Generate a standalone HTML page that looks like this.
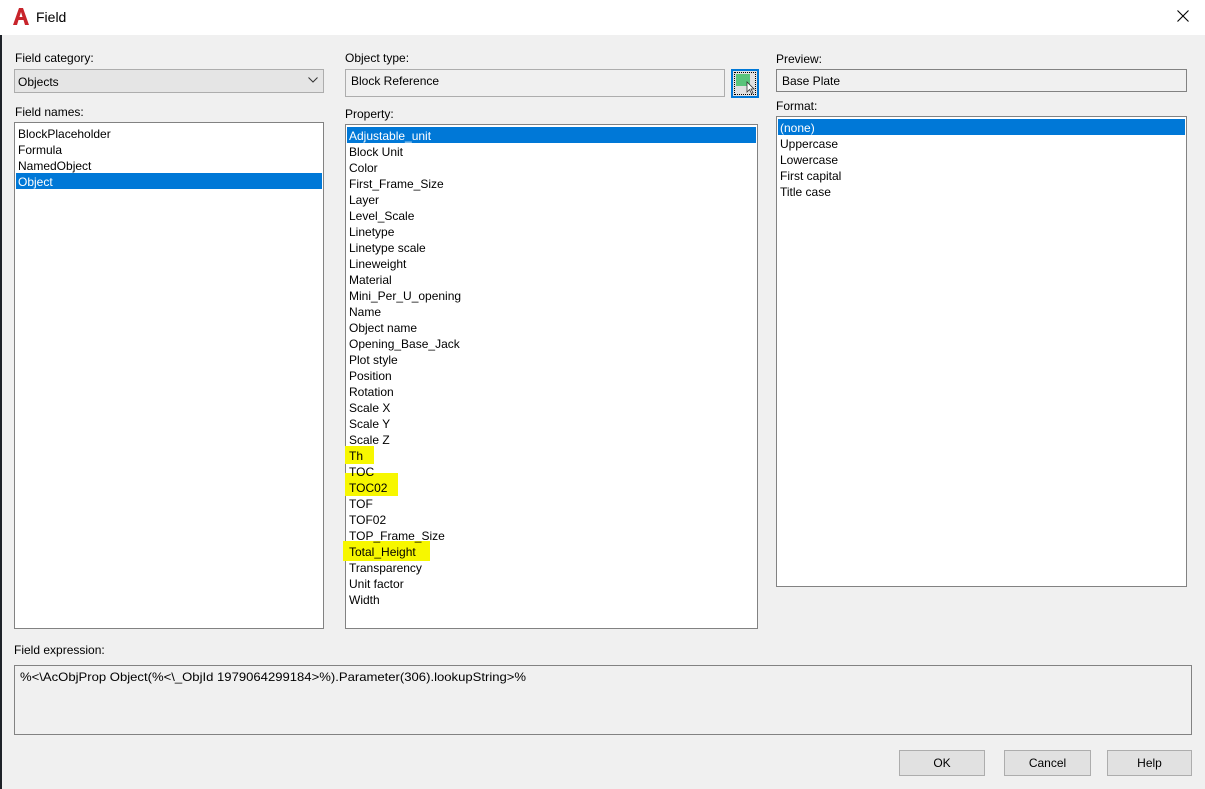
<!DOCTYPE html>
<html><head><style>
*{margin:0;padding:0;box-sizing:border-box}
body{width:1205px;height:789px;background:#f0f0f0;position:relative;overflow:hidden;font-family:"Liberation Sans",sans-serif;font-size:12px;color:#000}
.a{position:absolute}
.title{left:0;top:0;width:1205px;height:35px;background:#fff}
.lbl{position:absolute;font-size:12px;line-height:14px}
.box{position:absolute;background:#fff;border:1px solid #828282}
.row{position:absolute;height:16px;line-height:18px;white-space:nowrap;padding-left:2px}
.sel{background:#0078d7;color:#fff}
.yl{position:absolute;background:#f7f700}
.btn{position:absolute;background:#e1e1e1;border:1px solid #adadad;text-align:center;line-height:24px;font-size:12px}
</style></head><body>
<div class="a" style="left:0;top:35px;width:2px;height:754px;background:#1e2228"></div>
<div class="a title"></div>
<svg class="a" style="left:11px;top:7px" width="20" height="19" viewBox="0 0 20 19"><path d="M2 18 L8 1 L12 1 L18 18 L14 18 L12.5 13 L7.5 13 L6 18 Z M8.5 10 L11.5 10 L10 5 Z" fill="#c8242b"/></svg>
<div class="a" style="left:36px;top:8px;font-size:14px;line-height:18px">Field</div>
<svg class="a" style="left:1177px;top:10px" width="12" height="12" viewBox="0 0 12 12"><path d="M0.5 0.5 L11.5 11.5 M11.5 0.5 L0.5 11.5" stroke="#000" stroke-width="1.1"/></svg>

<div class="lbl" style="left:15px;top:51px">Field category:</div>
<div class="a" style="left:14px;top:69px;width:310px;height:24px;background:#e5e5e5;border:1px solid #adadad"></div>
<div class="lbl" style="left:18px;top:75px">Objects</div>
<svg class="a" style="left:308px;top:77px" width="10" height="6" viewBox="0 0 10 6"><path d="M0.5 0.5 L5 5 L9.5 0.5" stroke="#333" fill="none"/></svg>

<div class="lbl" style="left:15px;top:105px">Field names:</div>
<div class="box" style="left:14px;top:122px;width:310px;height:507px"></div>
<div class="row" style="left:16px;top:125px">BlockPlaceholder</div>
<div class="row" style="left:16px;top:141px">Formula</div>
<div class="row" style="left:16px;top:157px">NamedObject</div>
<div class="row sel" style="left:16px;top:173px;width:306px">Object</div>

<div class="lbl" style="left:345px;top:51px">Object type:</div>
<div class="a" style="left:345px;top:69px;width:380px;height:28px;background:#f0f0f0;border:1px solid #adadad"></div>
<div class="lbl" style="left:351px;top:74px">Block Reference</div>
<div class="a" style="left:731px;top:69px;width:28px;height:29px;border:2px solid #0078d7;background:#e1e1e1"></div>
<div class="a" style="left:734px;top:72px;width:22px;height:23px;border:1px dotted #000"></div>
<div class="a" style="left:736px;top:74px;width:14px;height:12px;background:#5ac47a"></div>
<svg class="a" style="left:746px;top:81px" width="9" height="13" viewBox="0 0 9 13"><path d="M1 1 L1 11 L3.5 8.5 L5.5 12.5 L7 11.8 L5 8 L8 8 Z" fill="#fff" stroke="#333" stroke-width="0.8"/></svg>

<div class="lbl" style="left:345px;top:107px">Property:</div>
<div class="box" style="left:345px;top:124px;width:413px;height:505px"></div>
<div class="yl" style="left:345px;top:446px;width:29px;height:18px"></div>
<div class="yl" style="left:345px;top:473px;width:53px;height:23px"></div>
<div class="yl" style="left:343px;top:541px;width:87px;height:20px"></div>
<div class="row sel" style="left:347px;top:127px;width:409px">Adjustable_unit</div>
<div class="row" style="left:347px;top:143px">Block Unit</div>
<div class="row" style="left:347px;top:159px">Color</div>
<div class="row" style="left:347px;top:175px">First_Frame_Size</div>
<div class="row" style="left:347px;top:191px">Layer</div>
<div class="row" style="left:347px;top:207px">Level_Scale</div>
<div class="row" style="left:347px;top:223px">Linetype</div>
<div class="row" style="left:347px;top:239px">Linetype scale</div>
<div class="row" style="left:347px;top:255px">Lineweight</div>
<div class="row" style="left:347px;top:271px">Material</div>
<div class="row" style="left:347px;top:287px">Mini_Per_U_opening</div>
<div class="row" style="left:347px;top:303px">Name</div>
<div class="row" style="left:347px;top:319px">Object name</div>
<div class="row" style="left:347px;top:335px">Opening_Base_Jack</div>
<div class="row" style="left:347px;top:351px">Plot style</div>
<div class="row" style="left:347px;top:367px">Position</div>
<div class="row" style="left:347px;top:383px">Rotation</div>
<div class="row" style="left:347px;top:399px">Scale X</div>
<div class="row" style="left:347px;top:415px">Scale Y</div>
<div class="row" style="left:347px;top:431px">Scale Z</div>
<div class="row" style="left:347px;top:447px">Th</div>
<div class="row" style="left:347px;top:463px">TOC</div>
<div class="row" style="left:347px;top:479px">TOC02</div>
<div class="row" style="left:347px;top:495px">TOF</div>
<div class="row" style="left:347px;top:511px">TOF02</div>
<div class="row" style="left:347px;top:527px">TOP_Frame_Size</div>
<div class="row" style="left:347px;top:543px">Total_Height</div>
<div class="row" style="left:347px;top:559px">Transparency</div>
<div class="row" style="left:347px;top:575px">Unit factor</div>
<div class="row" style="left:347px;top:591px">Width</div>

<div class="lbl" style="left:776px;top:52px">Preview:</div>
<div class="a" style="left:776px;top:69px;width:411px;height:23px;background:#f0f0f0;border:1px solid #828282"></div>
<div class="lbl" style="left:782px;top:74px">Base Plate</div>
<div class="lbl" style="left:776px;top:99px">Format:</div>
<div class="box" style="left:776px;top:116px;width:411px;height:471px"></div>
<div class="row sel" style="left:778px;top:119px;width:407px">(none)</div>
<div class="row" style="left:778px;top:135px">Uppercase</div>
<div class="row" style="left:778px;top:151px">Lowercase</div>
<div class="row" style="left:778px;top:167px">First capital</div>
<div class="row" style="left:778px;top:183px">Title case</div>

<div class="lbl" style="left:14px;top:643px">Field expression:</div>
<div class="a" style="left:14px;top:665px;width:1178px;height:70px;border:1px solid #828282;background:#f0f0f0"></div>
<div class="lbl" style="left:20px;top:670px;transform:scaleX(1.09);transform-origin:0 0;white-space:nowrap">%&lt;\AcObjProp Object(%&lt;\_ObjId 1979064299184&gt;%).Parameter(306).lookupString&gt;%</div>

<div class="btn" style="left:899px;top:750px;width:86px;height:26px">OK</div>
<div class="btn" style="left:1004px;top:750px;width:87px;height:26px">Cancel</div>
<div class="btn" style="left:1107px;top:750px;width:85px;height:26px">Help</div>
</body></html>
